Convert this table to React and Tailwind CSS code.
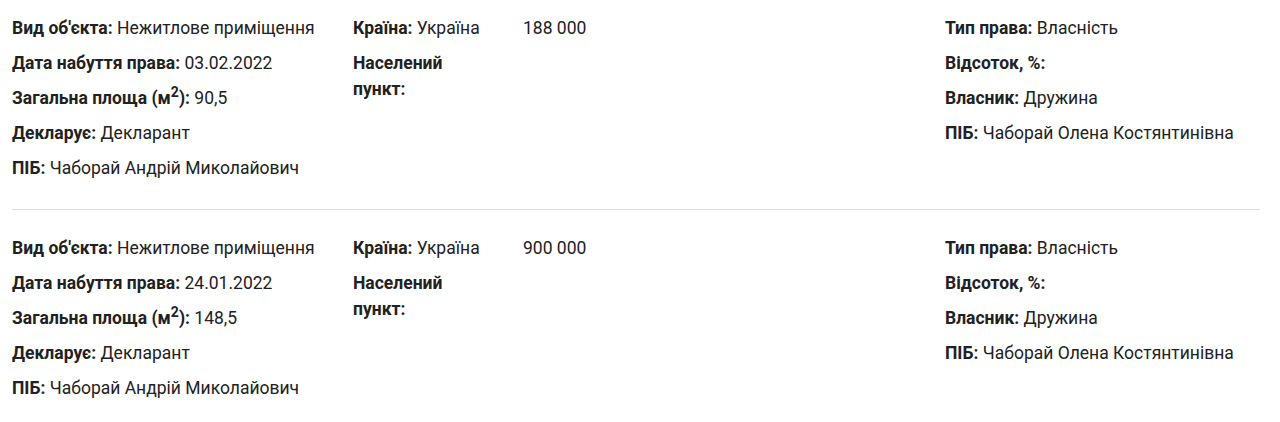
const rows = [
  { date: "03.02.2022", area: "90,5", cost: "188 000" },
  { date: "24.01.2022", area: "148,5", cost: "900 000" },
];

const Item = ({ label, children }) => (
  <div className="leading-[26px] mb-[9px]">
    <span className="font-bold">{label}</span> {children}
  </div>
);

export default function App() {
  return (
    <div className="bg-white text-[#212121] text-[17.5px] pl-3 pr-5" style={{ fontFamily: "Roboto, 'Noto Sans', sans-serif" }}>
      {rows.map((r, i) => (
        <div
          key={i}
          className={`flex ${i === 0 ? "pt-[15px] pb-[19px] border-b border-[#e0e0e0]" : "pt-[25px] pb-4"}`}
        >
          <div className="w-[341px] shrink-0">
            <Item label="Вид об'єкта:">Нежитлове приміщення</Item>
            <Item label="Дата набуття права:">{r.date}</Item>
            <Item label={<>Загальна площа (м<sup className="text-[0.8em]">2</sup>):</>}>{r.area}</Item>
            <Item label="Декларує:">Декларант</Item>
            <Item label="ПІБ:">Чаборай Андрій Миколайович</Item>
          </div>
          <div className="w-[135px] shrink-0 mr-[35px]">
            <Item label="Країна:">Україна</Item>
            <Item label="Населений пункт:"></Item>
          </div>
          <div className="w-[422px] shrink-0">
            <div className="leading-[26px]">{r.cost}</div>
          </div>
          <div className="flex-1">
            <Item label="Тип права:">Власність</Item>
            <Item label="Відсоток, %:"></Item>
            <Item label="Власник:">Дружина</Item>
            <Item label="ПІБ:">Чаборай Олена Костянтинівна</Item>
          </div>
        </div>
      ))}
    </div>
  );
}
